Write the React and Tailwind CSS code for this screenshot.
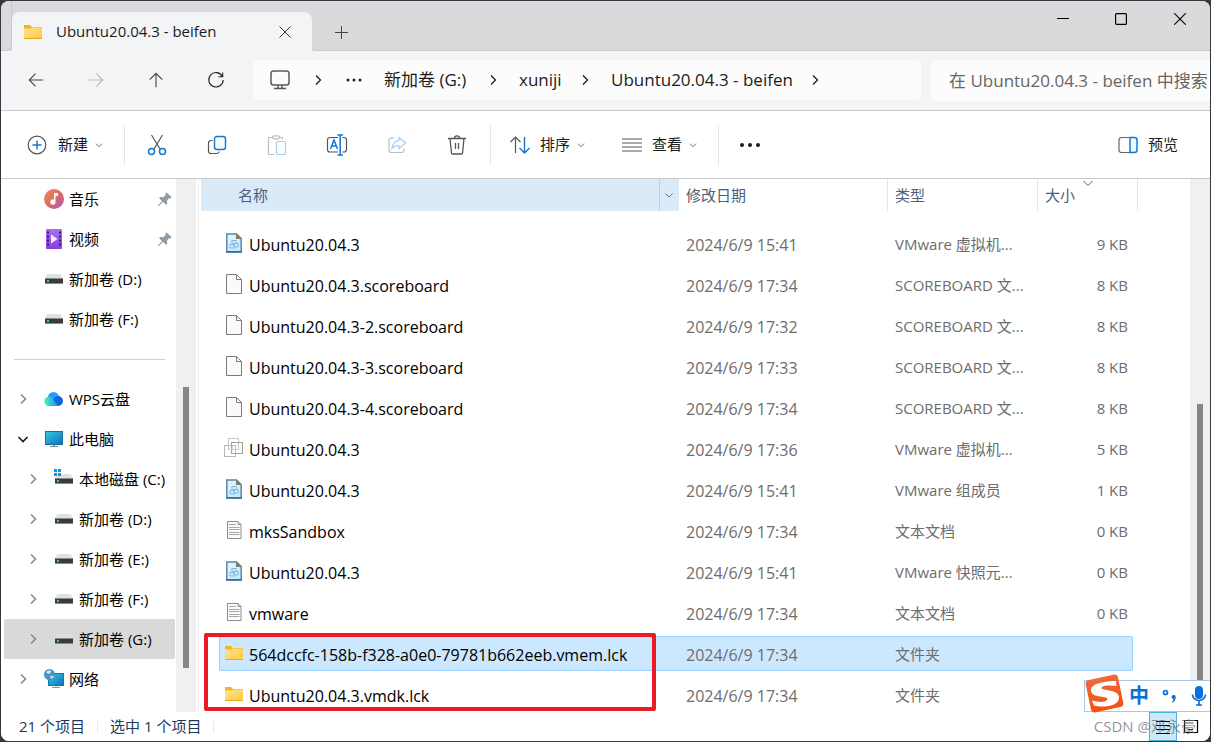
// src/App.jsx
// File explorer window: tabs, address bar, command bar, sidebar and file list.

import React, { useState } from 'react';

/* ---------- icons ---------- */

const Icon = ({ size = 20, box = 20, className = '', children }) => (
  <svg
    width={size}
    height={size}
    viewBox={`0 0 ${box} ${box}`}
    fill="none"
    stroke="currentColor"
    strokeWidth="1.2"
    className={`shrink-0 ${className}`}
    aria-hidden="true"
  >
    {children}
  </svg>
);

const Chevron = ({ dir = 'right', size = 12, className = '', weight = 1.3 }) => (
  <Icon size={size} box={12} className={className}>
    <path d={dir === 'right' ? 'M4 1.5 8.5 6 4 10.5' : 'M1.5 4 6 8.5 10.5 4'} strokeWidth={weight} />
  </Icon>
);

const FolderIcon = () => (
  <svg width="20" height="18" viewBox="0 0 20 18" className="shrink-0" aria-hidden="true">
    <defs>
      <linearGradient id="folder" x1="0" y1="0" x2="1" y2="1">
        <stop offset="0" stopColor="#ffe394" />
        <stop offset="1" stopColor="#ffcb3d" />
      </linearGradient>
    </defs>
    <path d="M1 2.5Q1 2 1.5 2H7l2 2h9.500q.5 0 .5.5V8H1Z" fill="#f5b51e" />
    <path d="M1 5.500h6.500L9 4.500h9.500q.5 0 .5.5V15.500q0 .5-.5.5h-17q-.5 0-.5-.5Z" fill="url(#folder)" />
    <path d="M1 15.500h18" stroke="#e9a820" />
  </svg>
);

const DriveIcon = ({ system }) => (
  <svg width="20" height="20" viewBox="0 0 20 20" className="shrink-0" aria-hidden="true">
    <path d="M4.500 5h11q1 0 1.500.7L19 9.500H1L3 5.700Q3.500 5 4.500 5Z" fill="#dfe0e4" />
    <rect x="1" y="9" width="18" height="6" fill="#8a8a8a" />
    <rect x="1" y="10" width="18" height="4" fill="#3b3b3b" />
    <rect x="3" y="11" width="2" height="2" fill="#37e04b" />
    {system && (
      <g fill="#1193e0">
        <rect x="0" y="0" width="3" height="3" />
        <rect x="4" y="0" width="3" height="3" />
        <rect x="0" y="4" width="3" height="3" />
        <rect x="4" y="4" width="3" height="3" />
      </g>
    )}
  </svg>
);

const MusicIcon = () => (
  <svg width="20" height="20" viewBox="0 0 20 20" className="shrink-0" aria-hidden="true">
    <defs>
      <linearGradient id="music" x1="0" y1="0" x2="1" y2="1">
        <stop offset="0" stopColor="#f08a4b" />
        <stop offset="0.550" stopColor="#d9696c" />
        <stop offset="1" stopColor="#9a5cc0" />
      </linearGradient>
    </defs>
    <circle cx="10" cy="10" r="10" fill="url(#music)" />
    <path d="M10 4h4v3h-2.500v6a2.600 2.600 0 1 1-1.500-2.300Z" fill="#fff" />
  </svg>
);

const VideoIcon = () => (
  <svg width="20" height="20" viewBox="0 0 20 20" className="shrink-0" aria-hidden="true">
    <defs>
      <linearGradient id="video" x1="0" y1="0" x2="0" y2="1">
        <stop offset="0" stopColor="#a970f2" />
        <stop offset="1" stopColor="#8a3fe0" />
      </linearGradient>
    </defs>
    <rect x="2" width="16" height="20" rx="1" fill="url(#video)" />
    <path d="M4 2.500v16M16 2.500v16" stroke="#3d1673" strokeWidth="2" strokeDasharray="2 2" />
    <path d="M7 5.500v9l6.500-4.500Z" fill="#f3eaff" />
  </svg>
);

const CloudIcon = () => (
  <svg width="20" height="20" viewBox="0 0 20 20" className="shrink-0" aria-hidden="true">
    <defs>
      <linearGradient id="cloud" x1="0" y1="0" x2="1" y2="0">
        <stop offset="0" stopColor="#4ff0bb" />
        <stop offset="1" stopColor="#1a8df0" />
      </linearGradient>
    </defs>
    <circle cx="9.500" cy="8.500" r="5.500" fill="#1ea0f8" />
    <circle cx="14" cy="12" r="5" fill="#0c66e4" />
    <path d="M5 17a4.600 4.600 0 1 1 3.700-7.300c2 2 2.800 4.800 5.800 7.300Z" fill="url(#cloud)" />
  </svg>
);

const ComputerIcon = () => (
  <svg width="20" height="20" viewBox="0 0 20 20" className="shrink-0" aria-hidden="true">
    <defs>
      <linearGradient id="screen" x1="0" y1="0" x2="1" y2="1">
        <stop offset="0" stopColor="#35cbe8" />
        <stop offset="1" stopColor="#0c6fb8" />
      </linearGradient>
    </defs>
    <rect x="1.500" y="2.500" width="17" height="13" fill="url(#screen)" stroke="#1b6f9c" />
    <path d="M9 16h2v2H9Z" fill="#9aa4ab" />
    <path d="M6 17.500h8" stroke="#7b858c" />
  </svg>
);

const NetworkIcon = () => (
  <svg width="20" height="20" viewBox="0 0 20 20" className="shrink-0" aria-hidden="true">
    <rect x="4.500" y="4.500" width="15" height="12" fill="url(#screen)" stroke="#1678a8" />
    <path d="M8 18.500h8M12 17v2" stroke="#8b959c" />
    <circle cx="5.500" cy="5.500" r="5.500" fill="#4a93c6" />
    <path d="M2 3q3-3 5-1 0 3-3 3ZM6 7q3-1 4 1l-3 2Z" fill="#c9e6f5" />
  </svg>
);

const PinIcon = () => (
  <svg width="16" height="16" viewBox="0 0 16 16" className="shrink-0" aria-hidden="true">
    <path
      d="M9.500 1.500 14.500 6l-1 1.500-1.500-.2-2 2.200.2 3.500-1.200.8L6 10.700 2 15l-.8.2.1-.9L5 10 2.200 7.200l.8-1.200 3.300.2L8.700 4 8.300 2.500Z"
      fill="#8f9aa3"
    />
  </svg>
);

const BlankFileIcon = () => (
  <svg width="20" height="20" viewBox="0 0 20 20" className="shrink-0" aria-hidden="true">
    <path d="M2.500.5h10l5 5v14h-15Z" fill="#fafafa" stroke="#7b7b7b" />
    <path d="M12.500.5v5h5" fill="none" stroke="#7b7b7b" />
  </svg>
);

const TextFileIcon = () => (
  <svg width="20" height="20" viewBox="0 0 20 20" className="shrink-0" aria-hidden="true">
    <path d="M3.500 1.500h10.500l3 3v14h-13.500Z" fill="#fbfbfb" stroke="#8e8e8e" />
    <path d="M14 1.500v3h3" fill="none" stroke="#8e8e8e" />
    <path d="M5 4.500h7M5 7.500h10.500M5 9.500h10.500M5 12.500h10.500M5 14.500h10.500" stroke="#a8a8a8" />
  </svg>
);

const VmFileIcon = () => (
  <svg width="20" height="20" viewBox="0 0 20 20" className="shrink-0" aria-hidden="true">
    <defs>
      <linearGradient id="vmfile" x1="0" y1="0" x2="1" y2="1">
        <stop offset="0" stopColor="#e9f4fb" />
        <stop offset="1" stopColor="#bfeaf2" />
      </linearGradient>
    </defs>
    <path d="M2.800 1h9.700l4.700 4.500V19H2.800Z" fill="url(#vmfile)" stroke="#5a86ad" strokeWidth="1.500" />
    <path d="M12 .5 17.500 6H12Z" fill="#7d7a68" />
    <path d="M2 18.800h16" stroke="#356b96" strokeWidth="1.500" />
    <g fill="#d5ecff" stroke="#7fb8ea">
      <rect x="8" y="7.500" width="4" height="3.500" />
      <rect x="6" y="11.500" width="4" height="3.500" />
      <rect x="10.500" y="10.500" width="3.500" height="3.500" />
    </g>
  </svg>
);

const VmMachineIcon = () => (
  <svg width="20" height="20" viewBox="0 0 20 20" className="shrink-0" aria-hidden="true">
    <g fill="none">
      <rect x="4.500" y=".5" width="10" height="11" stroke="#c6c6c6" />
      <rect x="7.500" y="4.500" width="11" height="11" stroke="#a0a0a0" />
      <rect x=".5" y="7.500" width="11" height="11" stroke="#b8b8b8" />
      <path d="M5.500 11.500h6M8.500 8v5" stroke="#cdd6ee" />
    </g>
  </svg>
);

const FILE_ICONS = {
  vm: VmFileIcon,
  blank: BlankFileIcon,
  machine: VmMachineIcon,
  text: TextFileIcon,
  folder: FolderIcon,
};

/* ---------- data ---------- */

const FILES = [
  { icon: 'vm', name: 'Ubuntu20.04.3', date: '2024/6/9 15:41', type: 'VMware 虚拟机...', size: '9 KB' },
  { icon: 'blank', name: 'Ubuntu20.04.3.scoreboard', date: '2024/6/9 17:34', type: 'SCOREBOARD 文...', size: '8 KB' },
  { icon: 'blank', name: 'Ubuntu20.04.3-2.scoreboard', date: '2024/6/9 17:32', type: 'SCOREBOARD 文...', size: '8 KB' },
  { icon: 'blank', name: 'Ubuntu20.04.3-3.scoreboard', date: '2024/6/9 17:33', type: 'SCOREBOARD 文...', size: '8 KB' },
  { icon: 'blank', name: 'Ubuntu20.04.3-4.scoreboard', date: '2024/6/9 17:34', type: 'SCOREBOARD 文...', size: '8 KB' },
  { icon: 'machine', name: 'Ubuntu20.04.3', date: '2024/6/9 17:36', type: 'VMware 虚拟机...', size: '5 KB' },
  { icon: 'vm', name: 'Ubuntu20.04.3', date: '2024/6/9 15:41', type: 'VMware 组成员', size: '1 KB' },
  { icon: 'text', name: 'mksSandbox', date: '2024/6/9 17:34', type: '文本文档', size: '0 KB' },
  { icon: 'vm', name: 'Ubuntu20.04.3', date: '2024/6/9 15:41', type: 'VMware 快照元...', size: '0 KB' },
  { icon: 'text', name: 'vmware', date: '2024/6/9 17:34', type: '文本文档', size: '0 KB' },
  { icon: 'folder', name: '564dccfc-158b-f328-a0e0-79781b662eeb.vmem.lck', date: '2024/6/9 17:34', type: '文件夹', size: '' },
  { icon: 'folder', name: 'Ubuntu20.04.3.vmdk.lck', date: '2024/6/9 17:34', type: '文件夹', size: '' },
];

const QUICK_ACCESS = [
  { label: '音乐', icon: <MusicIcon />, pinned: true },
  { label: '视频', icon: <VideoIcon />, pinned: true },
  { label: '新加卷 (D:)', icon: <DriveIcon /> },
  { label: '新加卷 (F:)', icon: <DriveIcon /> },
];

const TREE = [
  { label: 'WPS云盘', icon: <CloudIcon />, expandable: true },
  { label: '此电脑', icon: <ComputerIcon />, expandable: true, open: true },
  { label: '本地磁盘 (C:)', icon: <DriveIcon system />, expandable: true, child: true },
  { label: '新加卷 (D:)', icon: <DriveIcon />, expandable: true, child: true },
  { label: '新加卷 (E:)', icon: <DriveIcon />, expandable: true, child: true },
  { label: '新加卷 (F:)', icon: <DriveIcon />, expandable: true, child: true },
  { label: '新加卷 (G:)', icon: <DriveIcon />, expandable: true, child: true, active: true },
  { label: '网络', icon: <NetworkIcon />, expandable: true },
];

/* ---------- window chrome ---------- */

const TitleBar = () => (
  <header className="flex h-[50px] shrink-0 bg-[#d9dadc]">
    <div className="w-[11px] rounded-br-md border-b border-r border-[#c9cacc]" />
    <div className="mt-[11px] flex w-[300px] items-center rounded-t-lg bg-[#f3f4f6] pl-[11px] pr-[15px]">
      <FolderIcon />
      <span className="ml-[13px] flex-1 text-[15px] font-medium text-[#1b1b1b]">Ubuntu20.04.3 - beifen</span>
      <button aria-label="关闭标签页" className="flex h-6 w-6 items-center justify-center text-[#333]">
        <Icon size={12} box={12}><path d="m.5.5 11 11m0-11-11 11" strokeWidth="1" /></Icon>
      </button>
    </div>
    <div className="flex flex-1 items-start justify-between rounded-bl-md border-b border-[#c9cacc]">
      <button aria-label="新标签页" className="mt-[19px] flex h-6 w-[58px] items-center justify-center text-[#444]">
        <Icon size={13} box={13}><path d="M6.500 0v13M0 6.500h13" strokeWidth="1" /></Icon>
      </button>
      <div className="flex h-9 text-black">
        <button aria-label="最小化" className="flex w-[58px] items-center justify-center">
          <Icon size={12} box={12}><path d="M0 5.500h12" strokeWidth="1" /></Icon>
        </button>
        <button aria-label="最大化" className="flex w-[58px] items-center justify-center">
          <Icon size={12} box={12}><rect x=".6" y=".6" width="10.800" height="10.800" rx="1" /></Icon>
        </button>
        <button aria-label="关闭" className="flex w-[60px] items-center justify-center">
          <Icon size={12} box={12}><path d="m.3.3 11.400 11.400m0-11.400L.3 11.700" strokeWidth="1.100" /></Icon>
        </button>
      </div>
    </div>
  </header>
);

const NavBar = () => {
  const [query, setQuery] = useState('');

  return (
    <div className="flex h-[60px] shrink-0 items-start border-b border-[#c8c9cb] bg-[#f3f4f6] pt-[9px]">
      <div className="flex pl-[5px] pr-[7px] text-[#444]">
        <button aria-label="后退" className="flex h-10 w-[60px] items-center justify-center">
          <Icon size={18}><path d="M18 10H2.500M9.500 3l-7 7 7 7" /></Icon>
        </button>
        <button aria-label="前进" disabled className="flex h-10 w-[60px] items-center justify-center text-[#b5b6b8]">
          <Icon size={18}><path d="M2 10h15.500M10.500 3l7 7-7 7" /></Icon>
        </button>
        <button aria-label="向上" className="flex h-10 w-[60px] items-center justify-center">
          <Icon size={18}><path d="M10 18V2.500M3 9.500l7-7 7 7" /></Icon>
        </button>
        <button aria-label="刷新" className="flex h-10 w-[60px] items-center justify-center text-[#222]">
          <Icon><path d="M16.200 6.100A7.200 7.200 0 1 0 17.200 10M16.700 2.500v4.200h-4.200" strokeWidth="1.100" /></Icon>
        </button>
      </div>

      {/* Address */}
      <nav className="flex h-10 min-w-0 flex-1 items-center rounded-md bg-[#fcfcfc] pl-4 text-[17px] text-[#1b1b1b]">
        <Icon size={22} box={22} className="text-[#5a5a5a]">
          <rect x="2" y="2" width="18" height="14" rx="2.500" strokeWidth="1.500" />
          <path d="M9 16v3.500m4-3.500v3.500M5 19.500h12" strokeWidth="1.500" />
        </Icon>
        <Chevron className="ml-[21px]" />
        <button aria-label="更多路径" className="ml-[21px]">
          <svg width="18" height="4" viewBox="0 0 18 4" className="block fill-[#222]" aria-hidden="true">
            <circle cx="3" cy="2" r="1.500" /><circle cx="9" cy="2" r="1.500" /><circle cx="15" cy="2" r="1.500" />
          </svg>
        </button>
        <a href="#g" className="ml-[21px] w-[84px] whitespace-nowrap">新加卷 (G:)</a>
        <Chevron className="ml-[19px]" />
        <a href="#xuniji" className="ml-5 w-[42px] whitespace-nowrap">xuniji</a>
        <Chevron className="ml-[18px]" />
        <a href="#beifen" className="ml-5 w-[178px] whitespace-nowrap">Ubuntu20.04.3 - beifen</a>
        <Chevron className="ml-5" />
      </nav>

      <input
        type="text"
        aria-label="搜索"
        value={query}
        onChange={(e) => setQuery(e.target.value)}
        placeholder="在 Ubuntu20.04.3 - beifen 中搜索"
        className="ml-[10px] h-[41px] w-[279px] rounded-l-md bg-[#fcfcfc] pl-[18px] text-[17px] outline-none placeholder:text-[#666]"
      />
    </div>
  );
};

const ToolButton = ({ label, disabled, children }) => (
  <button
    aria-label={label}
    disabled={disabled}
    className="flex h-10 w-[60px] items-center justify-center text-[#555] disabled:text-[#bdbdbd]"
  >
    {children}
  </button>
);

const Divider = () => <div className="h-10 w-px bg-[#e6e6e6]" />;

const CommandBar = () => (
  <div className="flex h-[68px] shrink-0 items-center border-b border-[#c8c9cb] bg-white text-[15px] text-[#1b1b1b]">
    <button className="flex w-[123px] items-center pl-[26px]">
      <Icon size={20} className="text-[#555]">
        <circle cx="10" cy="10" r="8.800" />
        <path d="M10 5.500v9M5.500 10h9" stroke="#0f78d4" strokeWidth="1.400" />
      </Icon>
      <span className="ml-[11px]">新建</span>
      <Chevron dir="down" size={8} className="ml-[7px] text-[#555]" />
    </button>
    <Divider />
    <div className="flex pl-[2px] pr-[3px]">
      <ToolButton label="剪切">
        <Icon size={22} box={22}>
          <path d="m5.500 1 8.500 14M16.500 1 8 15" />
          <g stroke="#0f78d4" strokeWidth="1.500"><circle cx="5.500" cy="17.500" r="3" /><circle cx="16.500" cy="17.500" r="3" /></g>
        </Icon>
      </ToolButton>
      <ToolButton label="复制">
        <Icon>
          <path d="M5.500 5.500H4A2.500 2.500 0 0 0 1.500 8v8A2.500 2.500 0 0 0 4 18.500h6a2.500 2.500 0 0 0 2.400-2" />
          <rect x="7.500" y="1.500" width="11" height="13" rx="2.500" stroke="#0f78d4" strokeWidth="1.400" fill="#f5faff" />
        </Icon>
      </ToolButton>
      <ToolButton label="粘贴" disabled>
        <Icon>
          <path d="M6 2.500H2.500Q1.500 2.500 1.500 3.500v15q0 1 1 1H7M12 2.500h2.500q1 0 1 1v1" />
          <rect x="5.500" y=".8" width="7" height="3" rx="1.500" />
          <rect x="9.500" y="6.500" width="9" height="13" rx="1.500" stroke="#a4cdf2" />
        </Icon>
      </ToolButton>
      <ToolButton label="重命名">
        <Icon size={22} box={22}>
          <path d="M12 3.500H4A2.500 2.500 0 0 0 1.500 6v9.500A2.500 2.500 0 0 0 4 18h8M16.500 3.500h1.500A2.500 2.500 0 0 1 20.500 6v9.500A2.500 2.500 0 0 1 18 18h-1.500" />
          <path d="M14.200 1v20M11.500 1h5.500M11.500 20.900H17" stroke="#0f78d4" strokeWidth="1.500" />
          <path d="m4.500 15 3.500-9 3.500 9M5.600 12h4.800" stroke="#0f78d4" strokeWidth="1.500" />
        </Icon>
      </ToolButton>
      <ToolButton label="共享" disabled>
        <Icon>
          <path d="M7 3H4.500A2.500 2.500 0 0 0 2 5.500v9.500A2.500 2.500 0 0 0 4.500 17.500h10A2.500 2.500 0 0 0 17 15v-1.500" />
          <path d="M12 2.500 18.500 8 12 13.500V10.500C8.500 10.300 6.500 11.500 5 13.500 5.500 9 8 6 12 5.500Z" stroke="#a4cdf2" />
        </Icon>
      </ToolButton>
      <ToolButton label="删除">
        <Icon>
          <path d="M1 3.500h18M3 3.500l1.500 14.500q.1 1 1.100 1h8.800q1 0 1.100-1L17 3.500M7.300 3.200q.3-2.400 2.700-2.400t2.700 2.400M8.500 8v6M11.500 8v6" strokeWidth="1.300" />
        </Icon>
      </ToolButton>
    </div>
    <Divider />
    <button className="flex w-[112px] items-center pl-[18px]">
      <Icon size={22} box={22} className="text-[#555]">
        <path d="M6.500 19V3M1.500 8l5-5 5 5" />
        <path d="M15.500 3v16M10.500 14l5 5 5-5" stroke="#0f78d4" strokeWidth="1.400" />
      </Icon>
      <span className="ml-[9px]">排序</span>
      <Chevron dir="down" size={8} className="ml-[7px] text-[#555]" />
    </button>
    <button className="flex w-[115px] items-center pl-[19px]">
      <Icon size={20} className="text-[#555]">
        <path d="M0 4h20M0 8h20M0 12h20M0 16h20" />
      </Icon>
      <span className="ml-[10px]">查看</span>
      <Chevron dir="down" size={8} className="ml-[7px] text-[#555]" />
    </button>
    <Divider />
    <button aria-label="更多选项" className="flex h-10 w-[62px] items-center justify-center">
      <svg width="22" height="4" viewBox="0 0 22 4" className="fill-[#1b1b1b]" aria-hidden="true">
        <circle cx="3" cy="2" r="2" /><circle cx="11" cy="2" r="2" /><circle cx="19" cy="2" r="2" />
      </svg>
    </button>
    <button className="ml-auto mr-8 flex items-center gap-[10px]">
      <Icon className="text-[#666]">
        <path d="M12 2.500H3.500A2.500 2.500 0 0 0 1 5v10A2.500 2.500 0 0 0 3.500 17.500H12" />
        <path d="M12 2.500h4.500A2.500 2.500 0 0 1 19 5v10a2.500 2.500 0 0 1-2.500 2.500H12Z" stroke="#0f78d4" strokeWidth="1.500" fill="#f0f8ff" />
      </Icon>
      <span>预览</span>
    </button>
  </div>
);

/* ---------- sidebar ---------- */

const NavRow = ({ item }) => (
  <li className={item.active ? 'ml-[3px] mr-px rounded-xs bg-[#d9d9d9]' : 'ml-[3px] mr-px'}>
    <button className={`flex h-10 w-full items-center whitespace-nowrap ${item.child ? 'pl-[23px]' : 'pl-[13px]'}`}>
      <span className="flex w-[27px] shrink-0">
        {item.expandable && (
          <Chevron
            dir={item.open ? 'down' : 'right'}
            className={item.open ? 'text-[#1b1b1b]' : 'text-[#888]'}
            weight={1.6}
          />
        )}
      </span>
      {item.icon}
      <span className="ml-[5px]">{item.label}</span>
      {item.pinned && <span className="ml-auto mr-[2px]"><PinIcon /></span>}
    </button>
  </li>
);

const Sidebar = () => (
  <aside className="w-[175px] shrink-0 overflow-hidden text-[15px] text-black">
    <ul>
      {QUICK_ACCESS.map((item) => <NavRow key={item.label} item={item} />)}
    </ul>
    <div className="ml-[13px] mr-[11px] h-10 pt-5">
      <hr className="border-t border-[#d0d0d0]" />
    </div>
    <ul>
      {TREE.map((item) => <NavRow key={item.label} item={item} />)}
    </ul>
  </aside>
);

/* ---------- file list ---------- */

const Cell = ({ selected, edge = '', className = '', children }) => (
  <td className="p-0">
    <div
      className={`flex h-[35px] items-center whitespace-nowrap pt-[2px] ${className} ${
        selected ? `border-y border-[#99d1ff] bg-[#cce8ff] ${edge}` : ''
      }`}
    >
      {children}
    </div>
  </td>
);

const FileRow = ({ file, selected, onSelect }) => {
  const FileIcon = FILE_ICONS[file.icon];

  return (
    <tr className="h-[41px]" onClick={onSelect}>
      <td className="p-0" />
      <Cell
        selected={selected}
        edge="rounded-l-xs"
        className={`border-l text-[16px] text-black ${selected ? '' : 'border-transparent'}`}
      >
        <span className="flex w-[29px] shrink-0 pb-1 pl-1"><FileIcon /></span>
        {file.name}
      </Cell>
      <Cell selected={selected} className="pl-[7px] text-[16px]">{file.date}</Cell>
      <Cell selected={selected} className="pl-[7px]">{file.type}</Cell>
      <Cell
        selected={selected}
        edge="rounded-r-xs"
        className={`justify-end border-r pr-1 ${selected ? '' : 'border-transparent'}`}
      >
        {file.size}
      </Cell>
      <td className="p-0" />
      <td className="p-0" />
    </tr>
  );
};

const FileList = () => {
  const [selected, setSelected] = useState(10);

  return (
    <main className="relative min-w-0 flex-1 overflow-hidden pl-[2px]">
      <table className="w-full table-fixed border-collapse text-left text-[15px] text-[#6d6d6d]">
        <colgroup>
          <col className="w-[18px]" />
          <col />
          <col className="w-[209px]" />
          <col className="w-[150px]" />
          <col className="w-[95px]" />
          <col className="w-[5px]" />
          <col className="w-[52px]" />
        </colgroup>
        <thead className="text-[#4c607a]">
          <tr className="h-8">
            <th colSpan={2} className="p-0 font-normal">
              <div className="flex h-8 rounded-b-xs bg-[#d9ebf9]">
                <button className="flex-1 pl-[37px] text-left">名称</button>
                <button aria-label="筛选名称" className="flex w-5 items-center justify-center border-l border-[#b5cfe4]">
                  <Chevron dir="down" size={10} weight={1} />
                </button>
              </div>
            </th>
            <th className="p-0 font-normal">
              <button className="h-8 w-full border-r border-[#e5e5e5] pl-[7px] text-left">修改日期</button>
            </th>
            <th className="p-0 font-normal">
              <button className="h-8 w-full border-r border-[#e5e5e5] pl-[7px] text-left">类型</button>
            </th>
            <th colSpan={2} className="relative p-0 font-normal">
              <button className="h-8 w-full border-r border-[#e5e5e5] pl-[7px] text-left">大小</button>
              <Chevron dir="down" size={12} weight={1} className="absolute left-11 top-[-2px]" />
            </th>
            <th className="p-0" />
          </tr>
        </thead>
        <tbody>
          <tr className="h-3"><td colSpan={7} className="p-0" /></tr>
          {FILES.map((file, i) => (
            <FileRow key={i} file={file} selected={i === selected} onSelect={() => setSelected(i)} />
          ))}
        </tbody>
      </table>

      {/* Highlight around the lock folders */}
      <div className="pointer-events-none absolute left-[5px] top-[454px] h-[78px] w-[452px] rounded-xs border-4 border-[#ed1c24]" />
    </main>
  );
};

/* ---------- bottom ---------- */

const StatusBar = () => (
  <footer className="flex h-[29px] shrink-0 items-center bg-white pl-[18px] text-[15px] text-[#1e395b]">
    <span>21 个项目</span>
    <span className="ml-3 h-3 w-px bg-[#e8e8e8]" />
    <span className="ml-3">选中 1 个项目</span>
    <span className="ml-3 h-3 w-px bg-[#e8e8e8]" />
    <div className="ml-auto flex h-full pr-[5px] text-black">
      <button aria-label="详细信息" className="flex w-7 items-center justify-center border border-[#4db2e0] bg-[#cde8f6]">
        <Icon size={16} box={16}><path d="M1 2.500h14M1 6.500h14M1 10.500h14M1 14.500h14" strokeWidth="1" /></Icon>
      </button>
      <button aria-label="大图标" className="flex w-7 items-center justify-center">
        <Icon size={16} box={16}><path d="M1.500 1.500h13v12h-13Z" strokeWidth="1.200" /><path d="M5 10.500h5" strokeWidth="1" /></Icon>
      </button>
    </div>
  </footer>
);

const InputMethodBar = () => (
  <div className="absolute bottom-[29px] right-0 flex h-8 w-[126px] items-center border-y border-l border-[#a9c8e8] bg-white text-[#0a6fd6]">
    <svg width="40" height="40" viewBox="0 0 40 40" className="-mt-1 shrink-0" aria-hidden="true">
      <defs>
        <linearGradient id="ime" x1="0" y1="0" x2="0" y2="1">
          <stop offset="0" stopColor="#ee6a3c" />
          <stop offset="1" stopColor="#f4500f" />
        </linearGradient>
      </defs>
      <rect x="3" y="3" width="33" height="33" rx="4" fill="url(#ime)" transform="rotate(-12 19.500 19.500)" />
      <path
        d="M31 7C22 7 6 9 6 16c0 5 5 6 12 7 4 .6 5 1.500 4 3-2 2.500-8 2.500-15 .5l2 5c9 2.500 25 1 25-8 0-5-6-6.500-12-7.500-4-.7-6-1-5.500-2.500 1-2.500 9-2.500 15-1.500Z"
        fill="#fff"
      />
    </svg>
    <button aria-label="切换中英文" className="ml-1 pb-px text-[20px] font-bold leading-none">中</button>
    <button aria-label="标点" className="ml-[13px]">
      <svg width="16" height="16" viewBox="0 0 16 16" aria-hidden="true">
        <circle cx="3.500" cy="4.500" r="2" fill="none" stroke="#0a6fd6" strokeWidth="1.700" />
        <path d="M11.500 7a2 2 0 0 1 2.200 2.200c0 2.800-1.200 4.300-3.200 5.300l-.6-.9c1-.7 1.500-1.400 1.600-2.600a2 2 0 0 1 0-4Z" fill="#0a6fd6" />
      </svg>
    </button>
    <button aria-label="语音" className="ml-[13px]">
      <svg width="16" height="20" viewBox="0 0 16 20" aria-hidden="true">
        <rect x="4" y="0" width="8" height="13" rx="4" fill="#0a6fd6" />
        <path d="M1.500 8.500a6.500 6 0 0 0 13 0M5 19h6M8 15v3.500" fill="none" stroke="#0a6fd6" strokeWidth="1.700" />
      </svg>
    </button>
  </div>
);

const App = () => (
  <div className="h-screen bg-[#38383c] p-px font-['Open_Sans','Noto_Sans_CJK_SC',sans-serif]">
    <div className="relative flex h-full flex-col overflow-hidden rounded-lg bg-white">
      <TitleBar />
      <NavBar />
      <CommandBar />
      <div className="flex min-h-0 flex-1">
        <Sidebar />
        <div className="flex w-5 shrink-0 justify-center bg-[#f0f0f0] pt-[208px]">
          <div className="h-[281px] w-[6px] bg-[#868686]" />
        </div>
        <div className="ml-[2px] w-px shrink-0 bg-[#f0f0f0]" />
        <FileList />
        <div className="flex w-5 shrink-0 justify-center bg-[#f0f0f0] pt-[225px]">
          <div className="w-[6px] bg-[#868686]" />
        </div>
      </div>
      <StatusBar />
      <InputMethodBar />
      <span className="pointer-events-none absolute bottom-[5px] right-[14px] text-[15px] leading-5 text-[#666]/70">
        CSDN @邓永豪
      </span>
    </div>
  </div>
);

export default App;
